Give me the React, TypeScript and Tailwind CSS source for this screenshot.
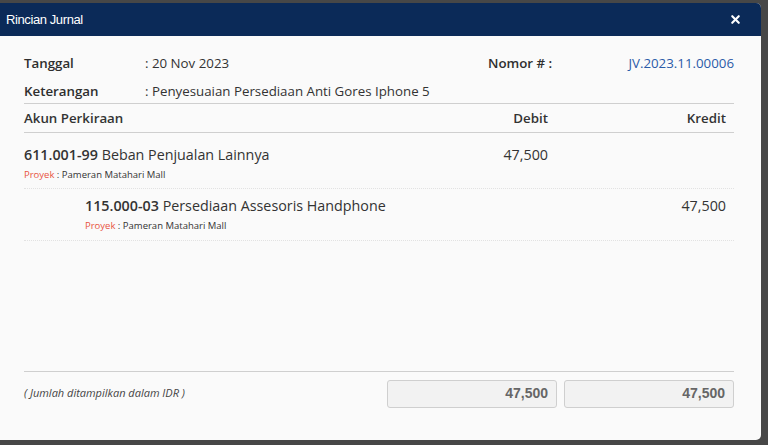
import { X } from "lucide-react";

const rows = [
  {
    code: "611.001-99",
    name: "Beban Penjualan Lainnya",
    proyek: "Pameran Matahari Mall",
    debit: "47,500",
    kredit: "",
    indent: false,
    pad: "pt-[10px] pb-[6px]",
  },
  {
    code: "115.000-03",
    name: "Persediaan Assesoris Handphone",
    proyek: "Pameran Matahari Mall",
    debit: "",
    kredit: "47,500",
    indent: true,
    pad: "pt-[5px] pb-[7px]",
  },
];

export default function App() {
  return (
    <div className="w-[768px] h-[445px] bg-[#474747] pt-[3px] overflow-hidden font-['Open_Sans',sans-serif]">
      <div className="w-[761px] h-[437px] bg-[#fafafa] rounded-r-[5px] flex flex-col overflow-hidden">
        {/* header */}
        <div className="h-[33px] bg-[#0b2a58] flex items-center justify-between pl-[6px] pr-[19px]">
          <span className="text-white text-[13px] tracking-[-0.4px] font-['Liberation_Sans_Narrow','Liberation_Sans',sans-serif]">
            Rincian Jurnal
          </span>
          <X className="text-white w-[13px] h-[13px]" strokeWidth={4} />
        </div>

        <div className="flex-1 flex flex-col pl-[24px] pr-[27px] text-[#333]">
          {/* info */}
          <div className="pt-[14px] mb-[-3px]">
            <div className="flex items-center h-[28px] text-[13.3px]">
              <span className="w-[121px] font-semibold text-[#2e2e2e]">Tanggal</span>
              <span className="flex-1">: 20 Nov 2023</span>
              <div className="w-[246px] flex justify-between">
                <span className="font-semibold text-[#2e2e2e]">Nomor # :</span>
                <span className="text-[#2a5ba8]">JV.2023.11.00006</span>
              </div>
            </div>
            <div className="flex items-center h-[28px] text-[13.3px]">
              <span className="w-[121px] font-semibold text-[#2e2e2e]">Keterangan</span>
              <span>: Penyesuaian Persediaan Anti Gores Iphone 5</span>
            </div>
          </div>

          {/* table header */}
          <div className="border-t border-b border-[#cfcfcf] h-[30px] flex items-center pt-[2px] text-[13.3px] font-semibold">
            <span className="flex-1">Akun Perkiraan</span>
            <span className="w-[100px] text-right">Debit</span>
            <span className="w-[186px] text-right pr-[8px]">Kredit</span>
          </div>

          {rows.map((r) => (
            <div key={r.code} className={`flex border-b border-dotted border-[#e2e2e2] ${r.pad}`}>
              <div className={`flex-1 ${r.indent ? "pl-[61px]" : ""}`}>
                <div className="text-[14.3px] leading-[24px]">
                  <span className="font-semibold">{r.code}</span> {r.name}
                </div>
                <div className="text-[9.5px] leading-[14px] mt-[1px]">
                  <span className="text-[#e8533f]">Proyek</span> : {r.proyek}
                </div>
              </div>
              <div className="w-[100px] text-right text-[14.3px] leading-[24px]">{r.debit}</div>
              <div className="w-[186px] text-right text-[14.3px] leading-[24px] pr-[8px]">{r.kredit}</div>
            </div>
          ))}

          <div className="flex-1" />

          {/* footer */}
          <div className="border-t border-[#cfcfcf] flex items-center h-[40px] mb-[29px] pt-[4px]">
            <span className="flex-1 italic text-[11px] text-[#444]">( Jumlah ditampilkan dalam IDR )</span>
            <div className="w-[170px] h-[28px] bg-[#f2f2f2] border border-[#cfcfcf] rounded-[3px] flex items-center justify-end pr-[8px] text-[14px] font-bold text-[#666] font-['Liberation_Sans',sans-serif]">
              47,500
            </div>
            <div className="w-[170px] ml-[7px] h-[28px] bg-[#f2f2f2] border border-[#cfcfcf] rounded-[3px] flex items-center justify-end pr-[8px] text-[14px] font-bold text-[#666] font-['Liberation_Sans',sans-serif]">
              47,500
            </div>
          </div>
        </div>
      </div>
    </div>
  );
}
